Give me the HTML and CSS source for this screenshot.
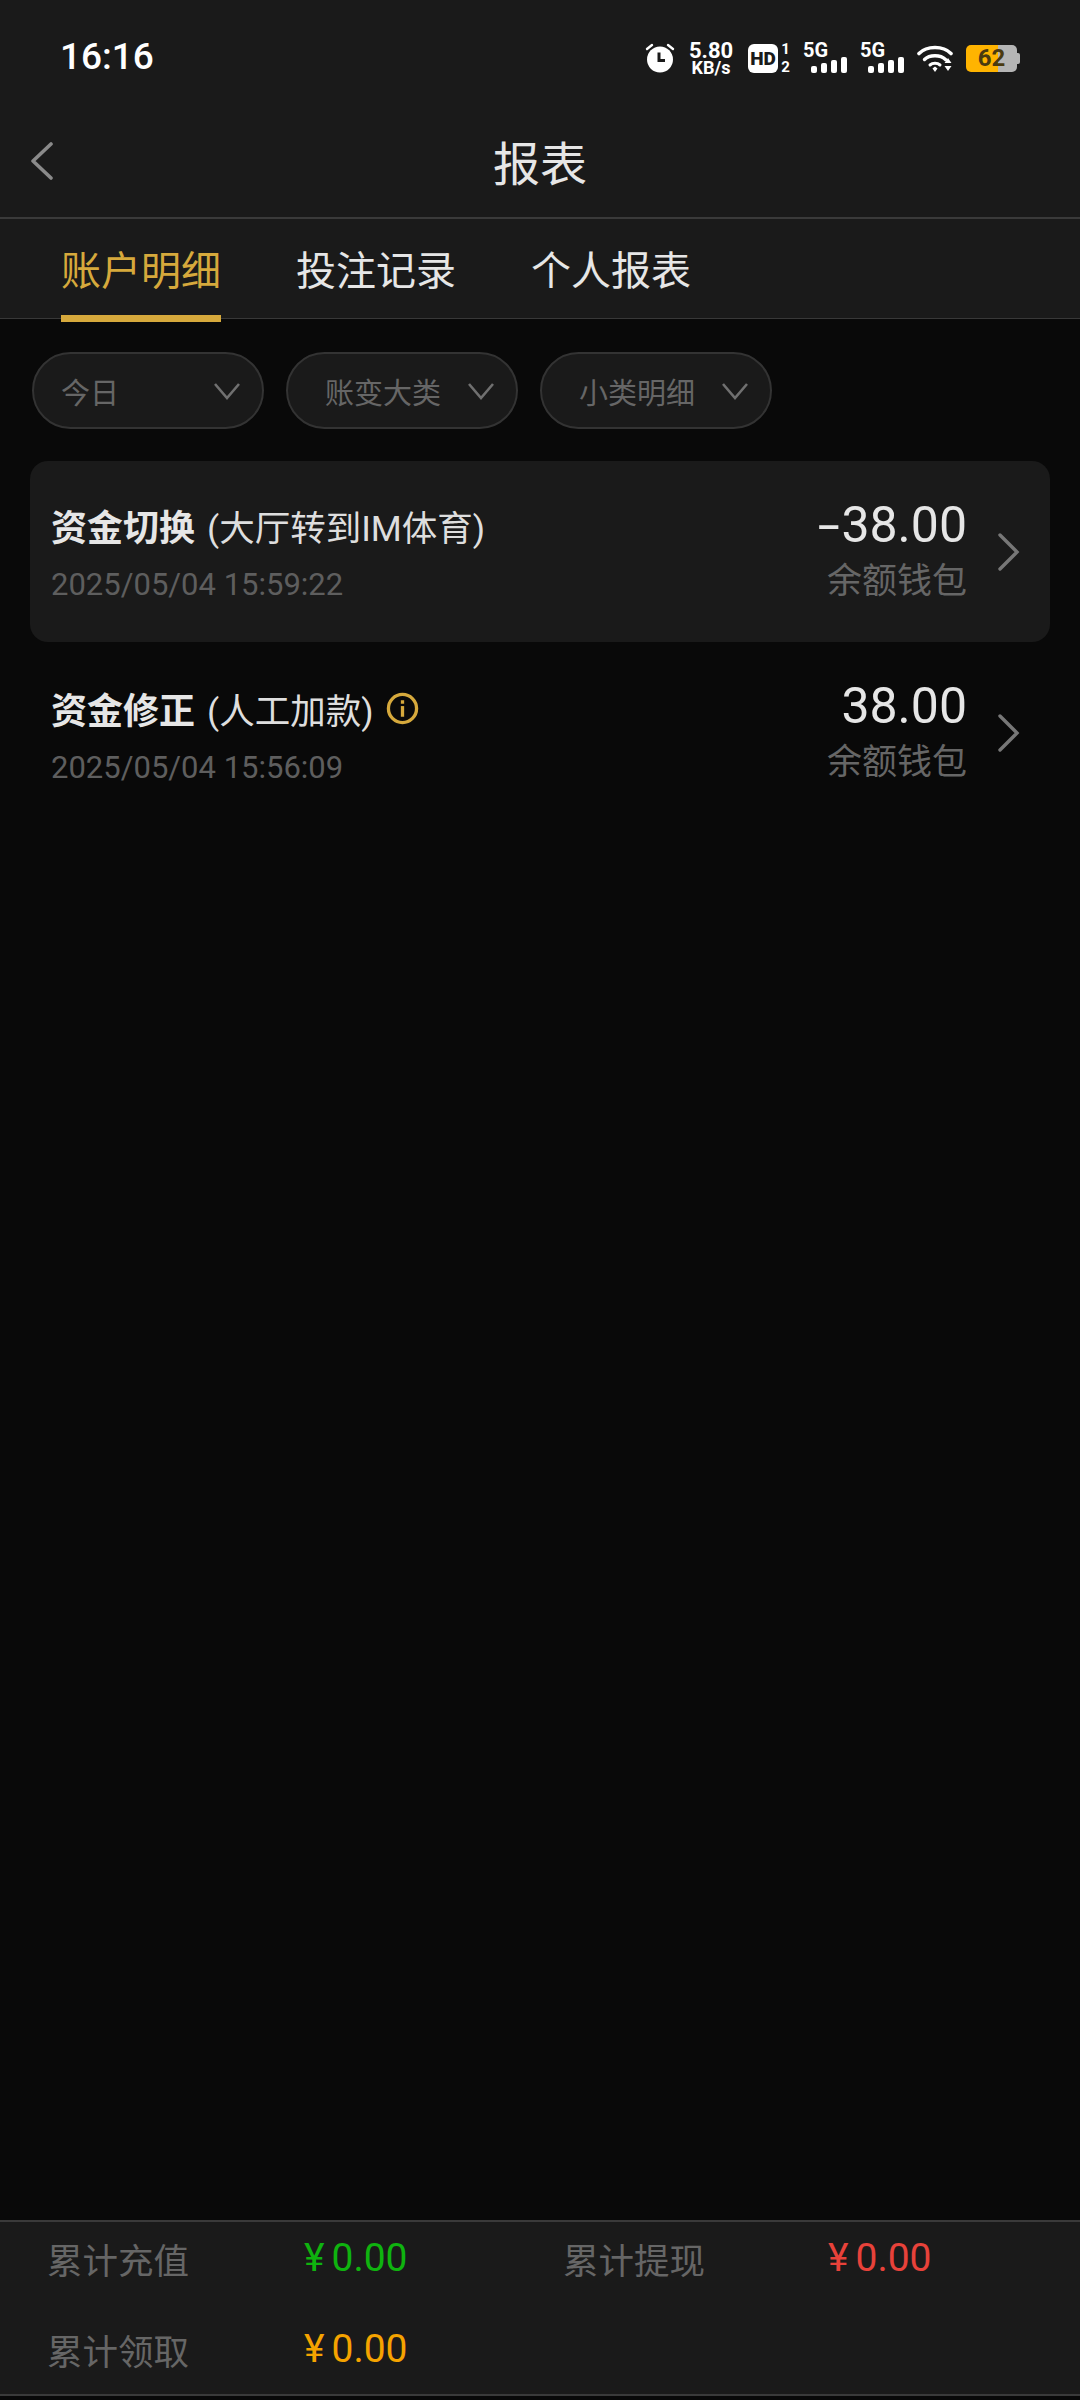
FILE: index.html
```html
<!DOCTYPE html>
<html lang="zh-CN">
<head>
  <meta charset="UTF-8" />
  <title>报表</title>
  <link rel="stylesheet" href="styles.css">
</head>
<body>
  <div class="status-bar">
    <span class="clock">16:16</span>
    <div class="status-icons">
      <svg class="ic-alarm" viewBox="0 0 30 30">
        <path d="M2 6 L7 2 M28 6 L23 2" stroke="#fff" stroke-width="2.4" stroke-linecap="round" fill="none"/>
        <circle cx="15" cy="16.5" r="13" fill="#fff"/>
        <path d="M14 9.5 V17.5 H20" stroke="#1a1a1a" stroke-width="3" fill="none"/>
      </svg>
      <div class="net-speed"><b>5.80</b><b class="unit">KB/s</b></div>
      <div class="hd-box">HD</div>
      <div class="sim-nums"><b>1</b><b>2</b></div>
      <div class="signal">
        <b>5G</b>
        <div class="bars"><i class="b1"></i><i class="b2"></i><i class="b3"></i><i class="b4"></i></div>
      </div>
      <div class="signal">
        <b>5G</b>
        <div class="bars"><i class="b1"></i><i class="b2"></i><i class="b3"></i><i class="b4"></i></div>
      </div>
      <svg class="ic-wifi" viewBox="0 0 37 28">
        <path d="M2 9.5 C10 1.5 26 1.5 34 9.5" stroke="#fff" stroke-width="3.6" fill="none" stroke-linecap="round"/>
        <path d="M7.5 15.5 C12.5 10.5 23.5 10.5 28.5 15.5" stroke="#fff" stroke-width="3.4" fill="none" stroke-linecap="round"/>
        <path d="M13 21 C15.5 18.8 20.5 18.8 23 21" stroke="#fff" stroke-width="3" fill="none" stroke-linecap="round"/>
        <path d="M15.5 24.5 L18 22.5 L20.5 24.5 L18 28 Z" fill="#fff"/>
        <path d="M31 14 L34.5 19 H27.5 Z M27.5 22 H34.5 L31 27 Z" fill="#fff"/>
      </svg>
      <div class="battery"><span class="battery-num">62</span></div>
    </div>
  </div>

  <header class="title-bar">
    <svg class="back" viewBox="0 0 24 38"><path d="M21 2 L3 19 L21 36" stroke="#8a8a8a" stroke-width="3.6" fill="none" stroke-linecap="round" stroke-linejoin="round"/></svg>
    <h1>报表</h1>
  </header>

  <nav class="tabs">
    <a class="tab active">账户明细</a>
    <a class="tab">投注记录</a>
    <a class="tab">个人报表</a>
  </nav>

  <main class="content">
    <div class="filters">
      <div class="chip chip-left"><span>今日</span><svg viewBox="0 0 28 18"><path d="M2 2 L14 16 L26 2" stroke="#707070" stroke-width="2.6" fill="none"/></svg></div>
      <div class="chip"><span>账变大类</span><svg viewBox="0 0 28 18"><path d="M2 2 L14 16 L26 2" stroke="#707070" stroke-width="2.6" fill="none"/></svg></div>
      <div class="chip"><span>小类明细</span><svg viewBox="0 0 28 18"><path d="M2 2 L14 16 L26 2" stroke="#707070" stroke-width="2.6" fill="none"/></svg></div>
    </div>

    <div class="record selected">
      <div class="record-left">
        <div class="record-title"><b>资金切换</b> <span>(大厅转到IM体育)</span></div>
        <div class="record-time">2025/05/04 15:59:22</div>
      </div>
      <div class="record-right">
        <div class="amount"><span class="minus">-</span>38.00</div>
        <div class="wallet">余额钱包</div>
      </div>
      <svg class="arrow" viewBox="0 0 24 40"><path d="M3 3 L20 20 L3 37" stroke="#777" stroke-width="3.4" fill="none" stroke-linecap="round"/></svg>
    </div>

    <div class="record">
      <div class="record-left lower">
        <div class="record-title"><b>资金修正</b> <span>(人工加款)</span>
          <svg class="info" viewBox="0 0 34 34"><circle cx="17" cy="17" r="14.5" stroke="#d6a93c" stroke-width="3.4" fill="none"/><rect x="15.3" y="14.5" width="3.4" height="11" fill="#d6a93c"/><rect x="15.3" y="8.5" width="3.4" height="3.6" fill="#d6a93c"/></svg>
        </div>
        <div class="record-time">2025/05/04 15:56:09</div>
      </div>
      <div class="record-right">
        <div class="amount">38.00</div>
        <div class="wallet">余额钱包</div>
      </div>
      <svg class="arrow" viewBox="0 0 24 40"><path d="M3 3 L20 20 L3 37" stroke="#777" stroke-width="3.4" fill="none" stroke-linecap="round"/></svg>
    </div>
  </main>

  <footer class="totals">
    <span class="total-label">累计充值</span><span class="total-val green"><i>¥</i>0.00</span>
    <span class="total-label">累计提现</span><span class="total-val red"><i>¥</i>0.00</span>
    <span class="total-label">累计领取</span><span class="total-val orange"><i>¥</i>0.00</span>
  </footer>
</body>
</html>
```

FILE: styles.css
```css
* {
  box-sizing: border-box;
}
html, body {
  margin: 0;
  height: 2400px;
}
body {
  width: 1080px;
  display: flex;
  flex-direction: column;
  background: #090909;
  color: #e6e6e6;
  font-family: Roboto, "Noto Sans CJK SC", sans-serif;
  overflow: hidden;
}

/* status bar */
.status-bar {
  height: 86px;
  flex: none;
  background: #1a1a1a;
  display: flex;
  justify-content: space-between;
  align-items: flex-end;
  padding: 0 63px 12px 60px;
  color: #fff;
}
.clock {
  font-size: 37px;
  font-weight: 500;
  line-height: 34px;
}
.status-icons {
  display: flex;
  align-items: center;
  height: 32px;
}
.ic-alarm {
  width: 30px;
  height: 30px;
  margin-right: 12px;
}
.net-speed {
  display: flex;
  flex-direction: column;
  align-items: center;
  width: 48px;
  margin-right: 13px;
  font-size: 22px;
  font-weight: 500;
  line-height: 19px;
}
.net-speed .unit {
  font-size: 18px;
  line-height: 15px;
}
.hd-box {
  width: 30px;
  height: 29px;
  margin-right: 2px;
  background: #fff;
  border-radius: 6px;
  color: #1a1a1a;
  font-size: 19px;
  font-weight: 900;
  line-height: 29px;
  text-align: center;
}
.sim-nums {
  display: flex;
  flex-direction: column;
  align-items: center;
  width: 11px;
  margin-right: 12px;
  font-size: 15px;
  line-height: 18px;
}
.signal {
  position: relative;
  width: 44px;
  height: 29px;
  margin-right: 13px;
}
.signal b {
  position: absolute;
  left: 0;
  top: -2px;
  font-size: 20px;
  line-height: 16px;
}
.bars {
  position: absolute;
  right: 0;
  bottom: 0;
  display: flex;
  align-items: flex-end;
  gap: 4px;
}
.bars i {
  width: 6px;
  background: #fff;
  border-radius: 2px;
}
.bars .b1 { height: 7px; }
.bars .b2 { height: 10px; }
.bars .b3 { height: 13px; }
.bars .b4 { height: 16px; }
.ic-wifi {
  width: 37px;
  height: 28px;
  margin-right: 12px;
}
.battery {
  position: relative;
  width: 51px;
  height: 27px;
  border-radius: 5px;
  background: linear-gradient(90deg, #ffb400 63%, #b5b5b5 63%);
  text-align: center;
}
.battery::after {
  content: "";
  position: absolute;
  right: -3px;
  top: 8px;
  width: 3px;
  height: 11px;
  background: #b5b5b5;
  border-radius: 0 2px 2px 0;
}
.battery-num {
  color: #4a3a10;
  font-size: 24px;
  font-weight: 700;
  line-height: 27px;
}

/* title */
.title-bar {
  height: 133px;
  flex: none;
  background: #1a1a1a;
  display: flex;
  align-items: center;
  justify-content: center;
  padding-top: 18px;
  position: relative;
  border-bottom: 2px solid #3a3a3a;
}
.title-bar h1 {
  margin: 0;
  font-size: 47px;
  font-weight: 400;
  color: #e6e6e6;
}
.back {
  position: absolute;
  left: 30px;
  top: 56px;
  width: 24px;
  height: 38px;
}

/* tabs */
.tabs {
  height: 100px;
  flex: none;
  background: #1a1a1a;
  border-bottom: 1px solid #383838;
  display: flex;
  align-items: flex-start;
  gap: 75px;
  padding-left: 61px;
}
.tab {
  font-size: 40px;
  line-height: 106px;
  color: #e6e6e6;
}
.tab.active {
  height: 103px;
  color: #d6a93c;
  border-bottom: 7px solid #d6a93c;
}

/* list */
.content {
  flex: 1;
  padding: 33px 30px 0;
}
.filters {
  display: flex;
  gap: 22px;
  padding-left: 2px;
  margin-bottom: 32px;
}
.chip {
  width: 232px;
  height: 77px;
  display: flex;
  align-items: center;
  justify-content: space-between;
  padding: 0 21px 0 37px;
  background: #1a1a1a;
  border: 2px solid #333;
  border-radius: 39px;
  font-size: 29px;
  color: #666;
}
.chip-left {
  padding-left: 27px;
}
.chip svg {
  width: 28px;
  height: 18px;
}
.record {
  height: 181px;
  display: flex;
  align-items: center;
  padding: 0 29px 0 21px;
  border-radius: 18px;
}
.record.selected {
  background: #1a1a1a;
}
.record-left {
  flex: 1;
  padding-top: 2px;
}
.record-left.lower {
  padding-top: 6px;
}
.record-title {
  display: flex;
  align-items: center;
  gap: 12px;
  height: 50px;
  font-size: 35.5px;
  color: #dedede;
}
.record-title b {
  font-size: 36px;
  font-weight: 700;
  color: #e6e6e6;
}
.info {
  width: 33px;
  height: 33px;
}
.record-time {
  margin-top: 15px;
  font-size: 31px;
  line-height: 40px;
  color: #5e5e5e;
}
.record-right {
  text-align: right;
  margin-right: 30px;
  padding-bottom: 4px;
}
.amount {
  font-size: 50px;
  line-height: 60px;
  color: #e6e6e6;
}
/* the app's minus is wider than a plain hyphen */
.minus {
  display: inline-block;
  margin-right: 2px;
  transform: scaleX(1.6);
  transform-origin: right center;
}
.wallet {
  margin-top: 4px;
  font-size: 35px;
  line-height: 46px;
  color: #666;
}
.arrow {
  width: 24px;
  height: 40px;
}

/* totals */
.totals {
  height: 176px;
  flex: none;
  margin-bottom: 4px;
  background: #1a1a1a;
  border-top: 2px solid #3a3a3a;
  border-bottom: 2px solid #3a3a3a;
  padding: 6px 0 0 47px;
  display: grid;
  grid-template-columns: 257px 259px 265px 1fr;
  grid-auto-rows: 60px;
  row-gap: 31px;
  align-items: center;
}
.total-label {
  font-size: 35.5px;
  color: #666;
}
.total-val {
  font-size: 39px;
}
.total-val i {
  font-style: normal;
  margin-right: 7px;
}
.green { color: #0fb30f; }
.red { color: #e8423a; }
.orange { color: #f5a300; }
```
